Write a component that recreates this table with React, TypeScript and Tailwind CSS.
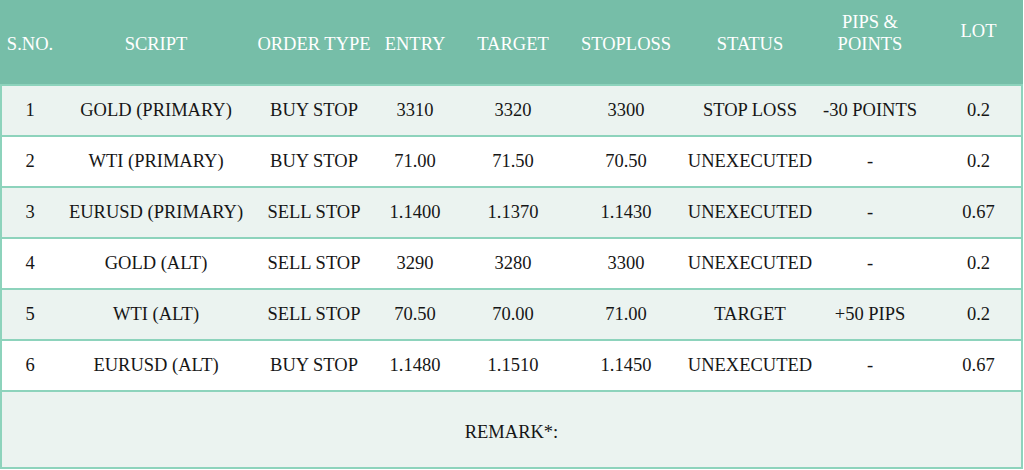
const rows = [
  ["1", "GOLD (PRIMARY)", "BUY STOP", "3310", "3320", "3300", "STOP LOSS", "-30 POINTS", "0.2"],
  ["2", "WTI (PRIMARY)", "BUY STOP", "71.00", "71.50", "70.50", "UNEXECUTED", "-", "0.2"],
  ["3", "EURUSD (PRIMARY)", "SELL STOP", "1.1400", "1.1370", "1.1430", "UNEXECUTED", "-", "0.67"],
  ["4", "GOLD (ALT)", "SELL STOP", "3290", "3280", "3300", "UNEXECUTED", "-", "0.2"],
  ["5", "WTI (ALT)", "SELL STOP", "70.50", "70.00", "71.00", "TARGET", "+50 PIPS", "0.2"],
  ["6", "EURUSD (ALT)", "BUY STOP", "1.1480", "1.1510", "1.1450", "UNEXECUTED", "-", "0.67"],
];

const cols = "grid grid-cols-[56px_196px_120px_82px_114px_112px_136px_104px_1fr]";

export default function App() {
  return (
    <div
      className="w-[1023px] bg-white text-[18.5px] leading-[22px] text-[#161616]"
      style={{ fontFamily: '"Liberation Serif", "Times New Roman", serif' }}
    >
      <div className={`${cols} h-[84px] bg-[#76bea8] text-white pl-[2px] pr-[2px]`}>
        <div className="flex justify-center pt-[33px]">S.NO.</div>
        <div className="flex justify-center pt-[33px]">SCRIPT</div>
        <div className="flex justify-center pt-[33px] whitespace-nowrap">ORDER TYPE</div>
        <div className="flex justify-center pt-[33px]">ENTRY</div>
        <div className="flex justify-center pt-[33px]">TARGET</div>
        <div className="flex justify-center pt-[33px]">STOPLOSS</div>
        <div className="flex justify-center pt-[33px]">STATUS</div>
        <div className="flex flex-col items-center pt-[11px]">
          <span>PIPS &amp;</span>
          <span>POINTS</span>
        </div>
        <div className="flex justify-center pt-[20px] pl-[14px]">LOT</div>
      </div>
      <div className="border-x-2 border-b-2 border-[#8dd3bc]">
        {rows.map((r, i) => (
          <div
            key={r[0]}
            className={`${cols} h-[51px] border-t-2 border-[#8dd3bc] ${i % 2 === 0 ? "bg-[#ebf3f0]" : "bg-white"}`}
          >
            {r.map((c, j) => (
              <div
                key={j}
                className={`flex items-center justify-center whitespace-nowrap pb-[2px] ${j === 8 ? "pl-[14px]" : ""}`}
              >
                {c}
              </div>
            ))}
          </div>
        ))}
        <div className="h-[77px] border-t-2 border-[#8dd3bc] bg-[#ebf3f0] flex items-center justify-center pt-[4px]">
          REMARK*:
        </div>
      </div>
    </div>
  );
}
